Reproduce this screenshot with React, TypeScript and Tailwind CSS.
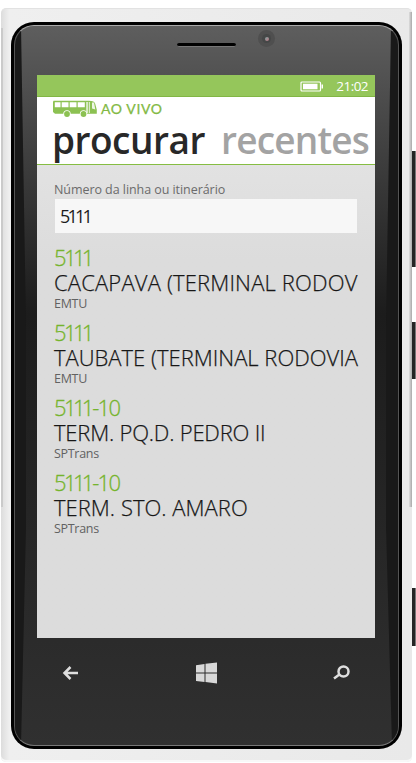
const lines = [
  { code: '5111', suffix: '', name: 'CACAPAVA (TERMINAL RODOV', agency: 'EMTU', nameCls: 'tracking-[0.16px]' },
  { code: '5111', suffix: '', name: 'TAUBATE (TERMINAL RODOVIA', agency: 'EMTU', nameCls: 'tracking-[0px]' },
  { code: '5111', suffix: '-10', name: 'TERM. PQ.D. PEDRO II', agency: 'SPTrans', nameCls: 'tracking-[-0.2px]' },
  { code: '5111', suffix: '-10', name: 'TERM. STO. AMARO', agency: 'SPTrans', nameCls: 'tracking-[0.03px]' },
];

function Bus() {
  return (
    <svg width="46" height="18" viewBox="0 0 46 18" className="shrink-0">
      <path d="M1.5 .8H37q5.500 0 6.200 3l1.600 6v4H3L1 12V2z" fill="#8cc152" />
      <path d="M2.800 2.300h5.700v5h-5.700zM9.700 2.300h6.800v5H9.700zM17.700 2.300h6.800v5h-6.800zM25.700 2.300h7.100v5h-7.100z" fill="#fff" />
      <path d="M34.300 2h1.500v11h-1.500zM36.800 2h1v11h-1zM40 2.500h2l1.300 7-3.300-1z" fill="#fff" opacity=".85" />
      <circle cx="15" cy="14" r="3.700" fill="#fff" />
      <circle cx="31.500" cy="14" r="3.700" fill="#fff" />
      <circle cx="15" cy="14" r="2.900" fill="#8cc152" />
      <circle cx="31.500" cy="14" r="2.900" fill="#8cc152" />
    </svg>
  );
}

function StatusBar() {
  return (
    <div className="flex h-[22px] items-center justify-end border-b border-[#82b645] bg-[#95c65b] pr-[7px] text-white">
      <svg width="24" height="11" viewBox="0 0 24 11" className="mt-px">
        <rect x="1" y="1" width="19.500" height="9" rx="1" fill="none" stroke="#fff" strokeWidth="1.200" />
        <path d="M3 2.700h14.500v5.600H3zM21.500 3.500h1.500v4h-1.500z" fill="#fff" />
      </svg>
      <span className="ml-[12px] text-[13.500px] leading-[20px] tracking-[-0.55px]">21:02</span>
    </div>
  );
}

function Screen() {
  return (
    <div className="ml-[23px] h-[563px] w-[338px] overflow-hidden bg-[#dedede]">
      <StatusBar />
      <header className="h-[68px] overflow-hidden border-b border-[#86bd42] bg-white">
        <div className="flex h-[25px] pl-[15px] pt-[3px]">
          <Bus />
          <span className="ml-[3px] font-['Lato',sans-serif] text-[14px] leading-[17px] tracking-[0.6px] text-[#82b944] [-webkit-text-stroke:0.25px_#82b944]">AO VIVO</span>
        </div>
        <div className="flex whitespace-nowrap pl-[15px] text-[37px] font-semibold leading-[36px]">
          <h1 className="w-[169px] tracking-[-0.5px] text-[#282828]">procurar</h1>
          <span className="tracking-[-0.8px] text-[#a3a3a3]">recentes</span>
        </div>
      </header>
      <main className="h-[473px] bg-linear-to-b from-[#e2e2e2] to-[#dcdcdc] to-20% pl-[17px] pt-[16px]">
        <label className="block h-[18px] text-[12.500px] leading-[18px] tracking-[-0.06px] text-[#6b6b6b]">Número da linha ou itinerário</label>
        <div className="ml-px h-[34px] w-[302px] bg-[#f7f7f7] pl-[5px] text-[18px] leading-[35px] text-[#1c1c1c]">
          <span className="tracking-[-2.800px] first-letter:tracking-[-1.500px]">5111</span>
        </div>
        <ul className="mt-[11.500px]">
          {lines.map((l, i) => (
            <li key={i} className="h-[75.300px] w-[306px] whitespace-nowrap">
              <div className="flex h-[25px] text-[22px] font-light leading-[25px] text-[#75b42c] [-webkit-text-stroke:0.3px_#75b42c]">
                <span className="block tracking-[-3.700px] first-letter:tracking-[-2.500px]">{l.code}</span>
                {l.suffix && <span className="ml-[1.500px] tracking-[-1.700px]">{l.suffix}</span>}
              </div>
              <div className={`h-[25px] text-[22px] font-light leading-[25px] text-[#171717] [-webkit-text-stroke:0.25px_#171717] ${l.nameCls}`}>{l.name}</div>
              <div className="h-[16px] text-[12.500px] leading-[17px] tracking-[-0.3px] text-[#626262]">{l.agency}</div>
            </li>
          ))}
        </ul>
      </main>
    </div>
  );
}

function SideButton({ className }: { className: string }) {
  return <div className={`absolute left-[412px] w-[4px] border-r border-[#777] bg-[#252525] ${className}`} />;
}

export default function App() {
  return (
    <div className="relative h-[763px] w-[416px] overflow-hidden bg-white pl-px pt-[8px] font-['Open_Sans','Noto_Sans',sans-serif]">
      <div className="h-[754px] w-[411px] rounded-[5px] border-t border-[#e2e2e2] bg-linear-to-r from-[#dcdcdc] via-[#efefef] via-2% to-[#e9e9e9] pl-[10px] pt-[13px] shadow-[inset_0_-2px_0_#f8f8f8]">
        <div className="h-[727px] w-[391px] rounded-[23px] bg-black p-[3px]">
          <div className="relative h-[721px] w-[385px] overflow-hidden rounded-[20px] border border-[#555] border-t-[#aaa] border-b-[#777] bg-linear-to-b from-[#5e5e5e] via-[#1c1c1c] via-40% to-[#303030]">
            <svg className="absolute inset-0" width="383" height="719" viewBox="0 0 383 719">
              <path d="M0 0H6L11 300V500L6 719H0zM383 0H376L371 300V500L377 719H383z" fill="#191919" />
            </svg>
            <div className="relative">
              <div className="relative -ml-px h-[49px] pl-[163px] pt-[17px]">
                <div className="h-[4px] w-[59px] rounded-full border-b border-[#777] bg-black" />
                <div className="absolute left-[244px] top-[4px] flex h-[17px] w-[17px] items-center justify-center rounded-full bg-[#4f4f4f]">
                  <div className="flex h-[9px] w-[9px] items-center justify-center rounded-full bg-[#454747]">
                    <div className="h-[4px] w-[4px] rounded-full bg-linear-to-br from-[#77a2a0] to-[#bd7483]" />
                  </div>
                </div>
              </div>
              <div className="-mx-px"><Screen /></div>
              <nav className="flex h-[69px] items-center justify-between pl-[47px] pr-[48px]">
                <svg width="17" height="14" viewBox="0 0 17 14"><path d="M16 7H2M8.500 1 2.500 7l6 6" fill="none" stroke="#dedede" strokeWidth="2.500" /></svg>
                <svg width="23" height="22" viewBox="0 0 23 22"><path d="M1 3.200 9.500 2v8.500H1zM10.500 1.800 22 .5v10H10.500zM1 11.500h8.500V20L1 19zM10.500 11.500H22v10l-11.500-1.400z" fill="#d8d8d8" /></svg>
                <svg width="17" height="15" viewBox="0 0 17 15"><circle cx="10.500" cy="6.500" r="5" fill="none" stroke="#dedede" strokeWidth="2.500" /><path d="m1 13.500 6-4.500" stroke="#dedede" strokeWidth="2.500" /></svg>
              </nav>
            </div>
          </div>
        </div>
      </div>
      <div className="absolute left-px top-[28px] h-[479px] w-[2px] bg-[#cacaca]" />
      <div className="absolute left-[409px] top-[12px] h-[495px] w-[3px] bg-linear-to-r from-[#ddd] to-[#aaa]" />
      <SideButton className="top-[151px] h-[116px]" />
      <SideButton className="top-[322px] h-[57px]" />
      <SideButton className="top-[588px] h-[58px]" />
    </div>
  );
}
